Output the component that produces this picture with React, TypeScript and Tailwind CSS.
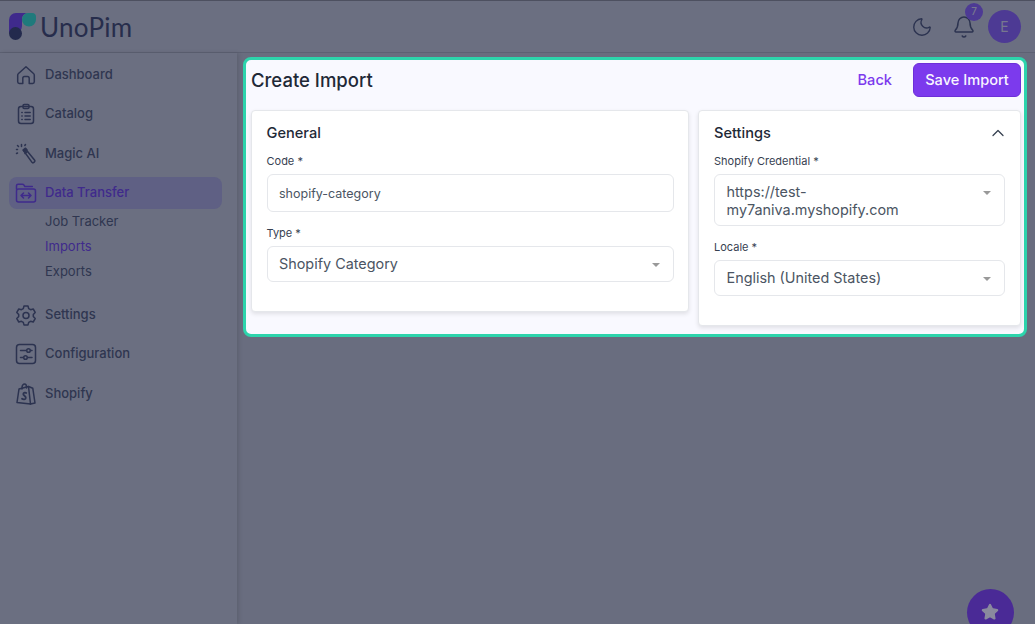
import { Bell, ChevronUp, Moon, Star } from "lucide-react";
import type { ReactNode } from "react";

const iconClass = "h-6 w-6 shrink-0 fill-none stroke-[#2c3350] stroke-[1.5]";

const icons: Record<string, ReactNode> = {
  Dashboard: (
    <svg viewBox="0 0 24 24" className={iconClass} strokeLinejoin="round">
      <path d="M4.500 10.500 12 3.700l7.500 6.800c.6.5.8 1 .8 1.800v6.500c0 1-.7 1.700-1.700 1.700h-3.400v-5.200c0-1-.7-1.800-1.700-1.800h-3c-1 0-1.700.8-1.700 1.800v5.200H5.400c-1 0-1.700-.7-1.700-1.700v-6.500c0-.8.2-1.300.8-1.800Z" />
    </svg>
  ),
  Catalog: (
    <svg viewBox="0 0 24 24" className={iconClass} strokeLinecap="round">
      <rect x="4.5" y="4.5" width="15" height="17" rx="2.5" />
      <rect x="9" y="2.5" width="6" height="4" rx="1.2" />
      <path d="M7.800 10.500h.4M11 10.500h5.200M7.800 14h.4M11 14h5.200M7.800 17.500h.4M11 17.500h5.200" />
    </svg>
  ),
  "Magic AI": (
    <svg viewBox="0 0 24 24" className={iconClass} strokeLinecap="round" strokeLinejoin="round">
      <path d="m9.500 8.500 2-1.500 9.200 11.300c.4.5.3 1.100-.2 1.500l-1 .8c-.5.4-1.100.3-1.500-.2L9.500 8.500Z" />
      <path d="m11 11.500 2.200-1.800" />
      <path d="M7.500 2.500v2M2.500 7.500h1M3.500 3.500l1 1M11.500 2.500l-.7 1M2.500 11.500l1-.5" />
      <path d="m9 8 2.500-1.800L13 8l-2.300 1.800Z" fill="#2c3350" />
    </svg>
  ),
  "Data Transfer": (
    <svg viewBox="0 0 24 24" className="h-6 w-6 shrink-0 fill-none stroke-[#3f2a8c] stroke-[1.5]" strokeLinecap="round" strokeLinejoin="round">
      <path d="M2.500 8V4.800c0-.9.7-1.600 1.600-1.600h4.400c.5 0 1 .2 1.300.7l1 1.600h7.500" />
      <rect x="2.5" y="8" width="19" height="13" rx="2" />
      <path d="M7 14.500h10M9.500 12 7 14.500 9.500 17M14.500 12l2.500 2.500-2.500 2.500" />
    </svg>
  ),
  Settings: (
    <svg viewBox="0 0 24 24" className={iconClass} strokeLinejoin="round">
      <path d="M10 3h4l.7 2.600 1.900 1.100 2.600-.7 2 3.400-1.900 2v2.200l1.900 2-2 3.400-2.600-.7-1.900 1.100L14 21.900h-4l-.7-2.500-1.900-1.100-2.600.7-2-3.400 1.900-2v-2.200l-1.900-2 2-3.400 2.600.7 1.900-1.100L10 3Z" />
      <circle cx="12" cy="12.4" r="3" />
    </svg>
  ),
  Configuration: (
    <svg viewBox="0 0 24 24" className={iconClass} strokeLinecap="round">
      <rect x="2.5" y="2.5" width="19" height="19" rx="3" />
      <path d="M6.500 8.500h6M16.500 8.500h1.500M9.500 15.500H6.500M13.500 15.500H18" />
      <circle cx="14.5" cy="8.5" r="1.8" />
      <circle cx="11.5" cy="15.5" r="1.8" />
    </svg>
  ),
  Shopify: (
    <svg viewBox="0 0 24 24" className={iconClass} strokeLinejoin="round" strokeLinecap="round">
      <path d="M3 20.500 5 7l9.500-2.500L16.500 22 3 20.500Z" />
      <path d="M16.500 22 21 21 18.800 6.300l-4.300-1.800" />
      <path d="M8 7V5.500C8 3.600 9.300 2 10.600 2c1.200 0 1.900 1.200 1.900 3v1" />
      <path d="M12.200 11c-.6-.5-2.800-.6-2.900 1-.1 1.700 2.700 2 2.500 4-.2 1.700-2.400 1.800-3.800.8" strokeWidth="1.800" />
    </svg>
  ),
};

function NavItem({ label, active }: { label: string; active?: boolean }) {
  return (
    <div className={`flex h-8 items-center gap-[7px] rounded-lg px-[5px] ${active ? "bg-[#5f6084] text-[#3f2a8c]" : "text-[#2f3650]"}`}>
      {icons[label]}
      <span className="text-[13px] font-[450]">{label}</span>
    </div>
  );
}

function SubItem({ label, active }: { label: string; active?: boolean }) {
  return <div className={`flex h-[25px] items-center pl-9 text-[13px] font-normal ${active ? "text-[#3f2a8c]" : "text-[#2f3650]"}`}>{label}</div>;
}

function Logo() {
  return (
    <div className="flex items-center gap-1">
      <svg width="27" height="27" viewBox="0 0 27 27">
        <path d="M7 0h12a6 6 0 0 0-6 6v7a7 7 0 0 1-7 7H0V7a7 7 0 0 1 7-7Z" fill="#3f2a8c" />
        <path d="M19 0h4a4 4 0 0 1 4 4v2.500a7 7 0 0 1-7 7 7 7 0 0 1-7-7 6.500 6.500 0 0 1 6-6.500Z" fill="#1f7a7c" />
        <circle cx="6.500" cy="20.500" r="6.500" fill="#232a4d" />
      </svg>
      <span className="font-['Lato',sans-serif] text-[26px] leading-none tracking-[0.3px] text-[#272d4c]">UnoPim</span>
    </div>
  );
}

function Field({ label, children }: { label: string; children: ReactNode }) {
  return (
    <div className="mb-[14.5px]">
      <label className="mb-[6px] block text-[11px] leading-[13px] font-normal text-[#374151]">{label} *</label>
      {children}
    </div>
  );
}

function SelectBox({ children }: { children: ReactNode }) {
  return (
    <div className="flex min-h-[36px] items-start justify-between rounded-md border border-[#e5e7eb] bg-white pt-[8px] pr-[13px] pb-[7px] pl-[11.5px] text-[14.4px] leading-[17.5px] text-[#4b5563]">
      <span className="w-[230px]">{children}</span>
      <span className="mt-[8px] h-0 w-0 border-x-[4.5px] border-t-[4.5px] border-x-transparent border-t-[#999999]" />
    </div>
  );
}

export default function App() {
  return (
    <div className="relative flex h-[624px] w-[1035px] flex-col overflow-hidden bg-[#696d7f] font-['Inter',sans-serif]">
      <header className="flex h-[53px] shrink-0 items-center justify-between border-y border-t-[#4d5060] border-b-[#5d6173] bg-[#6b6f81] pr-[14px] pl-[9px]">
        <Logo />
        <div className="flex items-center">
          <Moon className="h-[22px] w-[22px] stroke-[#2c3350] stroke-[1.5]" />
          <div className="relative ml-[19px]">
            <Bell className="h-6 w-6 stroke-[#2c3350] stroke-[1.5]" />
            <span className="absolute -top-[12px] left-[13px] flex h-[18px] w-[18px] items-center justify-center rounded-full bg-[#4d3a94] text-[10px] font-medium text-[#77778f]">7</span>
          </div>
          <span className="ml-[12px] flex h-[33px] w-[33px] items-center justify-center rounded-full bg-[#4d3a94] text-sm text-[#77778f]">E</span>
        </div>
      </header>
      <div className="flex flex-1">
        <aside className="flex w-[237px] shrink-0 flex-col gap-[7.5px] bg-[#6b6f81] pt-[5.5px] pr-[15px] pl-[9px] shadow-[2px_0_4px_rgba(0,0,0,0.12)]">
          <NavItem label="Dashboard" />
          <NavItem label="Catalog" />
          <NavItem label="Magic AI" />
          <div>
            <NavItem label="Data Transfer" active />
            <div>
              <SubItem label="Job Tracker" />
              <SubItem label="Imports" active />
              <SubItem label="Exports" />
            </div>
          </div>
          <div className="mt-[7px] flex flex-col gap-[7.5px]">
            <NavItem label="Settings" />
            <NavItem label="Configuration" />
            <NavItem label="Shopify" />
          </div>
        </aside>
        <main className="min-w-0 flex-1 pt-1 pr-2 pl-[6px]">
          <div className="h-[280px] rounded-lg border-[3px] border-[#2dd4ac] bg-[#f9f9ff] pr-[3px] pl-[5px]">
            <div className="flex h-[40px] items-center justify-between">
              <h1 className="text-[18.5px] leading-none font-[450] text-[#1f2937]">Create Import</h1>
              <div className="flex items-center gap-[21px]">
                <span className="pt-[2px] text-[14.6px] font-[450] text-[#7c3aed]">Back</span>
                <span className="flex h-[34px] w-[108px] items-center justify-center rounded-md border border-[#6d2fd8] bg-[#7c3aed] pt-px text-[14.6px] font-[450] text-[#f8f5ff]">Save Import</span>
              </div>
            </div>
            <div className="mt-[10px] flex items-start gap-[9px]">
              <section className="h-[202px] w-[438px] rounded border border-[#e5e7eb] bg-white px-[14.5px] pt-[13px] shadow-[0_2px_4px_rgba(0,0,0,0.1)]">
                <h2 className="mb-[13px] text-[14.6px] leading-[18px] font-[450] text-[#1f2937]">General</h2>
                <Field label="Code">
                  <div className="h-[38px] rounded-md border border-[#e5e7eb] pl-[11.5px] text-[12.5px] leading-[37px] text-[#4b5563]">shopify-category</div>
                </Field>
                <Field label="Type">
                  <SelectBox>Shopify Category</SelectBox>
                </Field>
              </section>
              <section className="h-[216px] w-[323px] rounded border border-[#e5e7eb] bg-white px-[15px] pt-[13px] shadow-[0_2px_4px_rgba(0,0,0,0.1)]">
                <div className="mb-[13px] flex items-center justify-between">
                  <h2 className="text-[14.6px] leading-[18px] font-[450] text-[#1f2937]">Settings</h2>
                  <ChevronUp className="-my-px -mr-[3px] h-5 w-5 stroke-[#374151] stroke-[1.5]" />
                </div>
                <Field label="Shopify Credential">
                  <SelectBox>https://test-my7aniva.myshopify.com</SelectBox>
                </Field>
                <Field label="Locale">
                  <SelectBox>English (United States)</SelectBox>
                </Field>
              </section>
            </div>
          </div>
        </main>
      </div>
      <button className="absolute top-[589px] left-[967px] flex h-[47px] w-[47px] items-start justify-center rounded-full bg-[#4a2a96] pt-[14px]">
        <Star className="-ml-px h-[18px] w-[18px] fill-[#8a8a9e] stroke-[#8a8a9e]" />
      </button>
    </div>
  );
}
